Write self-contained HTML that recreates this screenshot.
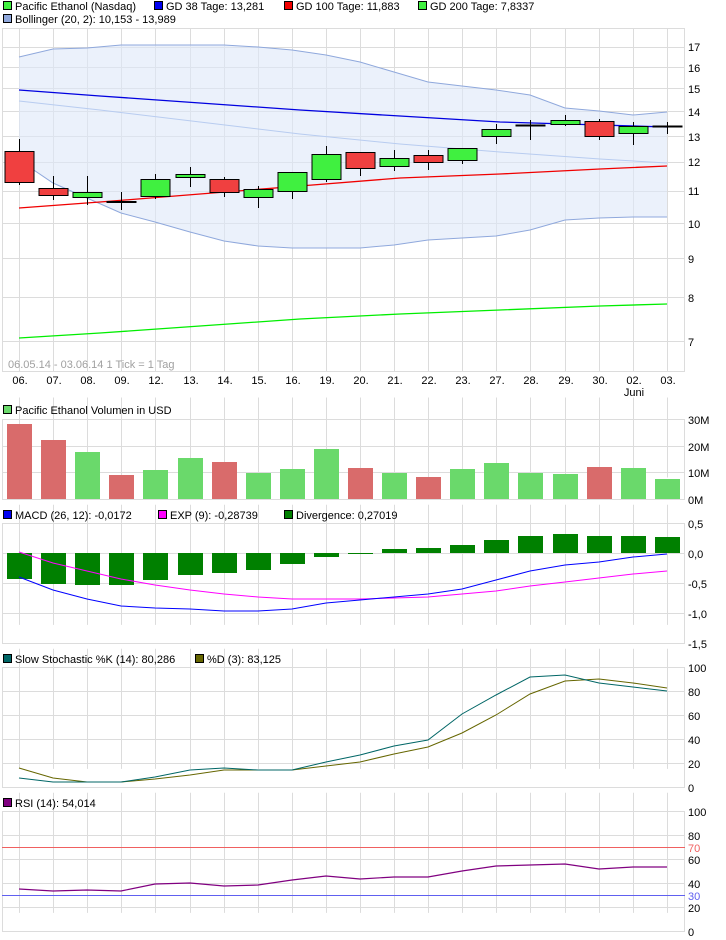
<!DOCTYPE html>
<html><head><meta charset="utf-8"><style>
html,body{margin:0;padding:0;background:#fff;width:726px;height:940px;overflow:hidden}
svg{display:block;font-family:"Liberation Sans",Arial,sans-serif;font-size:11px}
</style></head><body>
<svg width="726" height="940" xmlns="http://www.w3.org/2000/svg">
<g stroke="#dcdcdc" stroke-width="1" fill="none">
<!-- panel borders -->
<rect x="2.5" y="28.5" width="682" height="343"/>
<rect x="2.5" y="419.5" width="682" height="80"/>
<rect x="2.5" y="523.5" width="682" height="120"/>
<rect x="2.5" y="667.5" width="682" height="120"/>
<rect x="2.5" y="811.5" width="682" height="120"/>
</g>
<g stroke="#dcdcdc" stroke-width="1">
<!-- vertical grids -->
<g id="vg">
<line x1="19.5" x2="19.5" y1="28" y2="371"/><line x1="53.5" x2="53.5" y1="28" y2="371"/><line x1="87.5" x2="87.5" y1="28" y2="371"/><line x1="121.5" x2="121.5" y1="28" y2="371"/><line x1="155.5" x2="155.5" y1="28" y2="371"/><line x1="190.5" x2="190.5" y1="28" y2="371"/><line x1="224.5" x2="224.5" y1="28" y2="371"/><line x1="258.5" x2="258.5" y1="28" y2="371"/><line x1="292.5" x2="292.5" y1="28" y2="371"/><line x1="326.5" x2="326.5" y1="28" y2="371"/><line x1="360.5" x2="360.5" y1="28" y2="371"/><line x1="394.5" x2="394.5" y1="28" y2="371"/><line x1="428.5" x2="428.5" y1="28" y2="371"/><line x1="462.5" x2="462.5" y1="28" y2="371"/><line x1="496.5" x2="496.5" y1="28" y2="371"/><line x1="530.5" x2="530.5" y1="28" y2="371"/><line x1="565.5" x2="565.5" y1="28" y2="371"/><line x1="599.5" x2="599.5" y1="28" y2="371"/><line x1="633.5" x2="633.5" y1="28" y2="371"/><line x1="667.5" x2="667.5" y1="28" y2="371"/>
</g>
</g>
<defs><clipPath id="c1"><rect x="0" y="0" width="726" height="940"/></clipPath></defs>
<g stroke="#dcdcdc">
<g transform="translate(0,391) scale(1,0.2332)"><use href="#vg"/></g>
<g transform="translate(0,495) scale(1,0.3499)"><use href="#vg"/></g>
<g transform="translate(0,639) scale(1,0.3499)"><use href="#vg"/></g>
<g transform="translate(0,783) scale(1,0.3499)"><use href="#vg"/></g>
</g>
<g stroke="#dcdcdc" stroke-width="1">
<!-- main horizontals -->
<line x1="2" x2="685" y1="47.5" y2="47.5"/><line x1="2" x2="685" y1="67.5" y2="67.5"/><line x1="2" x2="685" y1="88.5" y2="88.5"/><line x1="2" x2="685" y1="111.5" y2="111.5"/><line x1="2" x2="685" y1="136.5" y2="136.5"/><line x1="2" x2="685" y1="162.5" y2="162.5"/><line x1="2" x2="685" y1="191.5" y2="191.5"/><line x1="2" x2="685" y1="223.5" y2="223.5"/><line x1="2" x2="685" y1="258.5" y2="258.5"/><line x1="2" x2="685" y1="297.5" y2="297.5"/><line x1="2" x2="685" y1="341.5" y2="341.5"/>
<!-- volume -->
<line x1="2" x2="685" y1="446.5" y2="446.5"/><line x1="2" x2="685" y1="472.5" y2="472.5"/>
<!-- macd -->
<line x1="2" x2="685" y1="553.5" y2="553.5"/><line x1="2" x2="685" y1="583.5" y2="583.5"/><line x1="2" x2="685" y1="613.5" y2="613.5"/>
<!-- stoch -->
<line x1="2" x2="685" y1="691.5" y2="691.5"/><line x1="2" x2="685" y1="715.5" y2="715.5"/><line x1="2" x2="685" y1="739.5" y2="739.5"/><line x1="2" x2="685" y1="763.5" y2="763.5"/>
<!-- rsi -->
<line x1="2" x2="685" y1="835.5" y2="835.5"/><line x1="2" x2="685" y1="859.5" y2="859.5"/><line x1="2" x2="685" y1="883.5" y2="883.5"/><line x1="2" x2="685" y1="907.5" y2="907.5"/>
</g>

<!-- Bollinger band -->
<polygon fill="#dde8f8" fill-opacity="0.6" points="19,57 53,49 87,48 121,45 155,45 190,45 224,45 258,47 292,50 326,55 360,62 394,72 428,82 462,86 496,90 530,95 565,108 599,111 633,115 667,112 667,217 633,217 599,218 565,220 530,230 496,236 462,238 428,240 394,245 360,248 326,248 292,248 258,246 224,241 190,232 155,222 121,213 87,198 53,183 19,160"/>
<polyline fill="none" stroke="#8fa8dc" points="19,57 53,49 87,48 121,45 155,45 190,45 224,45 258,47 292,50 326,55 360,62 394,72 428,82 462,86 496,90 530,95 565,108 599,111 633,115 667,112"/>
<polyline fill="none" stroke="#8fa8dc" points="19,160 53,183 87,198 121,213 155,222 190,232 224,241 258,246 292,248 326,248 360,248 394,245 428,240 462,238 496,236 530,230 565,220 599,218 633,217 667,217"/>
<polyline fill="none" stroke="#b8ccf0" points="19,101 100,110 200,122 300,134 400,144 500,152 600,159 667,163"/>
<polyline fill="none" stroke="#0000e0" stroke-width="1.3" points="19,90 100,96 200,103 300,110 400,116 500,122 600,125 667,127"/>
<polyline fill="none" stroke="#f00000" stroke-width="1.3" points="19,208 100,202 200,194 300,186 400,178 500,174 600,169 667,166"/>
<polyline fill="none" stroke="#00ee00" stroke-width="1.3" points="19,338 100,333 200,326 300,319 400,314 500,310 600,306 667,304"/>

<!-- candles -->
<g stroke="#000" stroke-width="1">
<line x1="19.5" x2="19.5" y1="139" y2="185"/><rect x="5" y="151.5" width="29" height="31" fill="#f04040"/>
<line x1="53.5" x2="53.5" y1="176" y2="200"/><rect x="39" y="188.5" width="29" height="7" fill="#f04040"/>
<line x1="87.5" x2="87.5" y1="176" y2="205"/><rect x="73" y="192.5" width="29" height="5" fill="#40f040"/>
<line x1="121.5" x2="121.5" y1="192" y2="210"/><rect x="107" y="201.5" width="29" height="1" fill="#000"/>
<line x1="155.5" x2="155.5" y1="174" y2="199"/><rect x="141" y="179.5" width="29" height="17" fill="#40f040"/>
<line x1="190.5" x2="190.5" y1="167" y2="187"/><rect x="176" y="174.5" width="29" height="3" fill="#40f040"/>
<line x1="224.5" x2="224.5" y1="177" y2="197"/><rect x="210" y="179.5" width="29" height="13" fill="#f04040"/>
<line x1="258.5" x2="258.5" y1="186" y2="208"/><rect x="244" y="189.5" width="29" height="8" fill="#40f040"/>
<line x1="292.5" x2="292.5" y1="172" y2="199"/><rect x="278" y="172.5" width="29" height="19" fill="#40f040"/>
<line x1="326.5" x2="326.5" y1="146" y2="182"/><rect x="312" y="154.5" width="29" height="25" fill="#40f040"/>
<line x1="360.5" x2="360.5" y1="152" y2="176"/><rect x="346" y="152.5" width="29" height="16" fill="#f04040"/>
<line x1="394.5" x2="394.5" y1="150" y2="171"/><rect x="380" y="158.5" width="29" height="8" fill="#40f040"/>
<line x1="428.5" x2="428.5" y1="150" y2="170"/><rect x="414" y="155.5" width="29" height="7" fill="#f04040"/>
<line x1="462.5" x2="462.5" y1="148" y2="164"/><rect x="448" y="148.5" width="29" height="12" fill="#40f040"/>
<line x1="496.5" x2="496.5" y1="124" y2="144"/><rect x="482" y="129.5" width="29" height="7" fill="#40f040"/>
<line x1="530.5" x2="530.5" y1="120" y2="140"/><rect x="516" y="125" width="29" height="1" fill="#000"/>
<line x1="565.5" x2="565.5" y1="115" y2="126"/><rect x="551" y="120.5" width="29" height="4" fill="#40f040"/>
<line x1="599.5" x2="599.5" y1="119" y2="140"/><rect x="585" y="121.5" width="29" height="15" fill="#f04040"/>
<line x1="633.5" x2="633.5" y1="122" y2="145"/><rect x="619" y="126.5" width="29" height="7" fill="#40f040"/>
<line x1="667.5" x2="667.5" y1="122" y2="134"/><rect x="653" y="126" width="29" height="1" fill="#000"/>
</g>

<!-- volume bars -->
<g>
<rect x="7" y="424" width="25" height="75" fill="#d96b6b"/>
<rect x="41" y="440" width="25" height="59" fill="#d96b6b"/>
<rect x="75" y="452" width="25" height="47" fill="#6ad96b"/>
<rect x="109" y="475" width="25" height="24" fill="#d96b6b"/>
<rect x="143" y="470" width="25" height="29" fill="#6ad96b"/>
<rect x="178" y="458" width="25" height="41" fill="#6ad96b"/>
<rect x="212" y="462" width="25" height="37" fill="#d96b6b"/>
<rect x="246" y="473" width="25" height="26" fill="#6ad96b"/>
<rect x="280" y="469" width="25" height="30" fill="#6ad96b"/>
<rect x="314" y="449" width="25" height="50" fill="#6ad96b"/>
<rect x="348" y="468" width="25" height="31" fill="#d96b6b"/>
<rect x="382" y="473" width="25" height="26" fill="#6ad96b"/>
<rect x="416" y="477" width="25" height="22" fill="#d96b6b"/>
<rect x="450" y="469" width="25" height="30" fill="#6ad96b"/>
<rect x="484" y="463" width="25" height="36" fill="#6ad96b"/>
<rect x="518" y="473" width="25" height="26" fill="#6ad96b"/>
<rect x="553" y="474" width="25" height="25" fill="#6ad96b"/>
<rect x="587" y="467" width="25" height="32" fill="#d96b6b"/>
<rect x="621" y="468" width="25" height="31" fill="#6ad96b"/>
<rect x="655" y="479" width="25" height="20" fill="#6ad96b"/>
</g>

<!-- MACD bars -->
<g fill="#008000">
<rect x="7" y="553" width="25" height="26"/>
<rect x="41" y="553" width="25" height="31"/>
<rect x="75" y="553" width="25" height="32"/>
<rect x="109" y="553" width="25" height="32"/>
<rect x="143" y="553" width="25" height="27"/>
<rect x="178" y="553" width="25" height="22"/>
<rect x="212" y="553" width="25" height="20"/>
<rect x="246" y="553" width="25" height="17"/>
<rect x="280" y="553" width="25" height="11"/>
<rect x="314" y="553" width="25" height="4"/>
<rect x="348" y="553" width="25" height="1"/>
<rect x="382" y="549" width="25" height="4"/>
<rect x="416" y="548" width="25" height="5"/>
<rect x="450" y="545" width="25" height="8"/>
<rect x="484" y="540" width="25" height="13"/>
<rect x="518" y="536" width="25" height="17"/>
<rect x="553" y="534" width="25" height="19"/>
<rect x="587" y="536" width="25" height="17"/>
<rect x="621" y="536" width="25" height="17"/>
<rect x="655" y="537" width="25" height="16"/>
</g>
<polyline fill="none" stroke="#ff00ff" points="19,552 53,563 87,571 121,579 155,585 190,590 224,594 258,597 292,599 326,599 360,599 394,598 428,597 462,594 496,591 530,586 565,582 599,578 633,574 667,571"/>
<polyline fill="none" stroke="#0000ff" points="19,577 53,590 87,599 121,606 155,608 190,609 224,611 258,611 292,609 326,603 360,600 394,597 428,594 462,589 496,580 530,571 565,565 599,562 633,557 667,554"/>

<!-- Stochastic -->
<polyline fill="none" stroke="#666600" points="19,768 53,778 87,782 121,782 155,779 190,775 224,770 258,770 292,770 326,766 360,762 394,754 428,747 462,733 496,715 530,694 565,681 599,679 633,683 667,688"/>
<polyline fill="none" stroke="#006666" points="19,778 53,782 87,782 121,782 155,777 190,770 224,768 258,770 292,770 326,762 360,755 394,746 428,740 462,714 496,695 530,677 565,675 599,683 633,687 667,691"/>

<!-- RSI -->
<line x1="2" x2="685" y1="847.5" y2="847.5" stroke="#f06060"/>
<line x1="2" x2="685" y1="895.5" y2="895.5" stroke="#6060f0"/>
<polyline fill="none" stroke="#800080" stroke-width="1.2" points="19,889 53,891 87,890 121,891 155,884 190,883 224,886 258,885 292,880 326,876 360,879 394,877 428,877 462,871 496,866 530,865 565,864 599,869 633,867 667,867"/>

<!-- legends -->
<g stroke="#000" stroke-width="1">
<rect x="3.5" y="1.5" width="8" height="8" fill="#40f040"/>
<rect x="154.5" y="1.5" width="8" height="8" fill="#0000f0"/>
<rect x="284.5" y="1.5" width="8" height="8" fill="#f00000"/>
<rect x="418.5" y="1.5" width="8" height="8" fill="#40f040"/>
<rect x="3.5" y="14.5" width="8" height="8" fill="#90a8dc"/>
<rect x="3.5" y="405.5" width="8" height="8" fill="#6ad96b"/>
<rect x="3.5" y="510.5" width="8" height="8" fill="#0000f0"/>
<rect x="158.5" y="510.5" width="8" height="8" fill="#ff00ff"/>
<rect x="284.5" y="510.5" width="8" height="8" fill="#008000"/>
<rect x="3.5" y="654.5" width="8" height="8" fill="#006666"/>
<rect x="195.5" y="654.5" width="8" height="8" fill="#666600"/>
<rect x="3.5" y="798.5" width="8" height="8" fill="#800080"/>
</g>
<g fill="#000">
<text x="15" y="10">Pacific Ethanol (Nasdaq)</text>
<text x="166" y="10">GD 38 Tage: 13,281</text>
<text x="296" y="10">GD 100 Tage: 11,883</text>
<text x="430" y="10">GD 200 Tage: 7,8337</text>
<text x="15" y="23">Bollinger (20, 2): 10,153 - 13,989</text>
<text x="15" y="414">Pacific Ethanol Volumen in USD</text>
<text x="15" y="519">MACD (26, 12): -0,0172</text>
<text x="170" y="519">EXP (9): -0,28739</text>
<text x="296" y="519">Divergence: 0,27019</text>
<text x="15" y="663">Slow Stochastic %K (14): 80,286</text>
<text x="207" y="663">%D (3): 83,125</text>
<text x="15" y="807">RSI (14): 54,014</text>
</g>
<text x="8" y="368" fill="#a0a0a0">06.05.14 - 03.06.14   1 Tick = 1 Tag</text>
<!-- date labels -->
<g text-anchor="middle" fill="#000">
<text x="20" y="384">06.</text><text x="54" y="384">07.</text><text x="88" y="384">08.</text><text x="122" y="384">09.</text><text x="156" y="384">12.</text><text x="191" y="384">13.</text><text x="225" y="384">14.</text><text x="259" y="384">15.</text><text x="293" y="384">16.</text><text x="327" y="384">19.</text><text x="361" y="384">20.</text><text x="395" y="384">21.</text><text x="429" y="384">22.</text><text x="463" y="384">23.</text><text x="497" y="384">27.</text><text x="531" y="384">28.</text><text x="566" y="384">29.</text><text x="600" y="384">30.</text><text x="634" y="384">02.</text><text x="668" y="384">03.</text>
<text x="634" y="396">Juni</text>
</g>
<!-- y labels -->
<g fill="#000">
<text x="688" y="51">17</text><text x="688" y="72">16</text><text x="688" y="93">15</text><text x="688" y="116">14</text><text x="688" y="141">13</text><text x="688" y="166">12</text><text x="688" y="195">11</text><text x="688" y="228">10</text><text x="688" y="263">9</text><text x="688" y="302">8</text><text x="688" y="346">7</text>
<text x="688" y="424">30M</text><text x="688" y="451">20M</text><text x="688" y="477">10M</text><text x="688" y="504">0M</text>
<text x="688" y="528">0,5</text><text x="688" y="558">0,0</text><text x="688" y="588">-0,5</text><text x="688" y="618">-1,0</text><text x="688" y="648">-1,5</text>
<text x="688" y="672">100</text><text x="688" y="696">80</text><text x="688" y="720">60</text><text x="688" y="744">40</text><text x="688" y="768">20</text><text x="688" y="792">0</text>
<text x="688" y="816">100</text><text x="688" y="840">80</text><text x="688" y="864">60</text><text x="688" y="888">40</text><text x="688" y="912">20</text><text x="688" y="936">0</text>
<text x="688" y="852" fill="#f06060">70</text><text x="688" y="900" fill="#6060f0">30</text>
</g>
</svg>
</body></html>
